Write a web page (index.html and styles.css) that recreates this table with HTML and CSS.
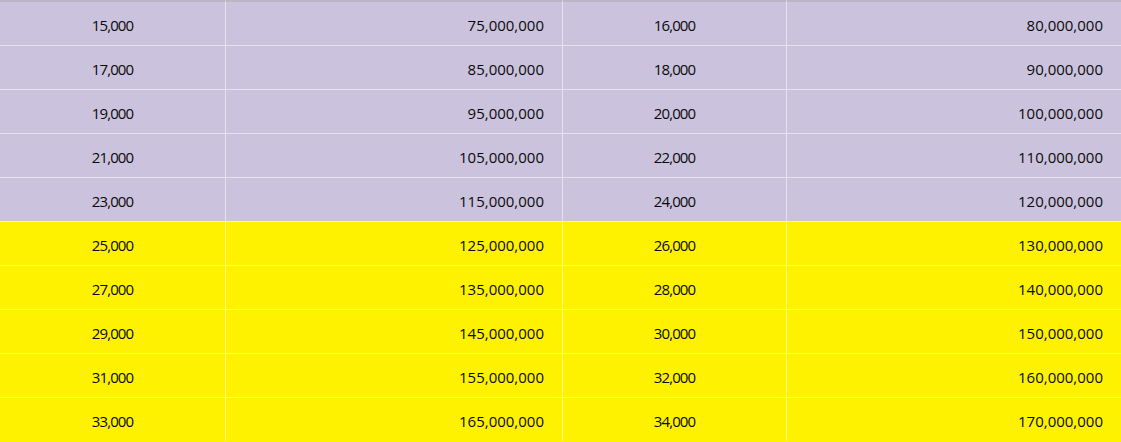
FILE: index.html
```html
<!DOCTYPE html>
<html>
<head>
<meta charset="utf-8">
<link rel="stylesheet" href="styles.css">
</head>
<body>
<table class="grid">
  <colgroup>
    <col class="c1"><col class="c2"><col class="c3"><col class="c4">
  </colgroup>
  <tbody>
    <tr class="row purple"><td class="qty">15,000</td><td class="amt">75,000,000</td><td class="qty">16,000</td><td class="amt">80,000,000</td></tr>
    <tr class="row purple"><td class="qty">17,000</td><td class="amt">85,000,000</td><td class="qty">18,000</td><td class="amt">90,000,000</td></tr>
    <tr class="row purple"><td class="qty">19,000</td><td class="amt">95,000,000</td><td class="qty">20,000</td><td class="amt">100,000,000</td></tr>
    <tr class="row purple"><td class="qty">21,000</td><td class="amt">105,000,000</td><td class="qty">22,000</td><td class="amt">110,000,000</td></tr>
    <tr class="row purple"><td class="qty">23,000</td><td class="amt">115,000,000</td><td class="qty">24,000</td><td class="amt">120,000,000</td></tr>
    <tr class="row yellow"><td class="qty">25,000</td><td class="amt">125,000,000</td><td class="qty">26,000</td><td class="amt">130,000,000</td></tr>
    <tr class="row yellow"><td class="qty">27,000</td><td class="amt">135,000,000</td><td class="qty">28,000</td><td class="amt">140,000,000</td></tr>
    <tr class="row yellow"><td class="qty">29,000</td><td class="amt">145,000,000</td><td class="qty">30,000</td><td class="amt">150,000,000</td></tr>
    <tr class="row yellow"><td class="qty">31,000</td><td class="amt">155,000,000</td><td class="qty">32,000</td><td class="amt">160,000,000</td></tr>
    <tr class="row yellow"><td class="qty">33,000</td><td class="amt">165,000,000</td><td class="qty">34,000</td><td class="amt">170,000,000</td></tr>
  </tbody>
</table>
</body>
</html>
```
FILE: styles.css
```css
html, body {
  margin: 0;
  padding: 0;
  background: #fff200;
}

.grid {
  width: 1121px;
  table-layout: fixed;
  border-collapse: separate;
  border-spacing: 0;
  font-family: "Open Sans", "Noto Sans", sans-serif;
  font-size: 15px;
  color: #0a0a0a;
}

.c1 { width: 226px; }
.c2 { width: 337px; }
.c3 { width: 224px; }
.c4 { width: 334px; }

.row td {
  height: 44px;
  padding: 3px 0 0 0;
  box-sizing: border-box;
  border-top: 1px solid rgba(255, 255, 255, 0.5);
  border-right: 1px solid rgba(255, 255, 255, 0.5);
  white-space: nowrap;
  line-height: 20px;
}

.row td:last-child {
  border-right: none;
}

.row:first-child td {
  border-top: 2px solid #bab6c2;
  height: 45px;
}

.purple td { background: #cbc3dd; }
.yellow td { background: #fff200; }

.qty {
  text-align: center;
  letter-spacing: -0.9px;
}

.row .amt {
  text-align: right;
  padding-right: 18px;
}
```
